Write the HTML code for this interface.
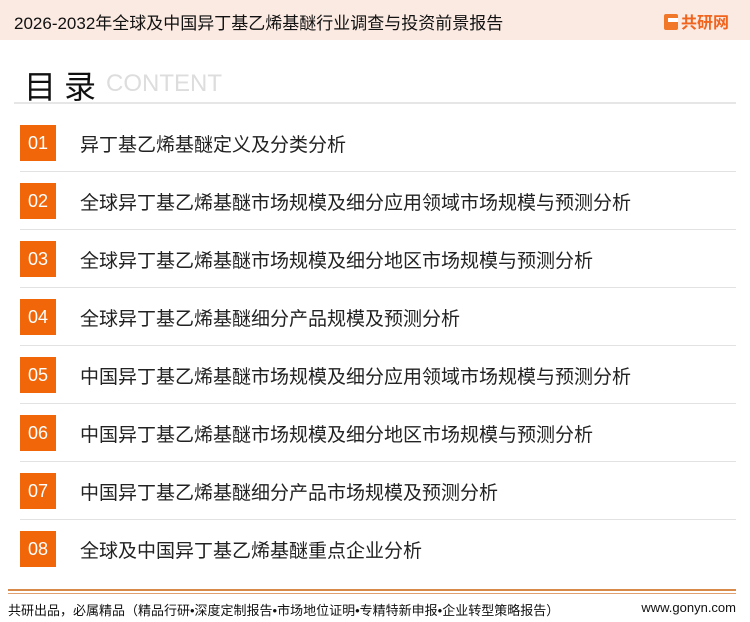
<!DOCTYPE html>
<html><head><meta charset="utf-8"><style>
*{margin:0;padding:0;box-sizing:border-box}
body{width:750px;height:622px;background:#fff;font-family:"Liberation Sans","Noto Sans CJK SC",sans-serif;position:relative;overflow:hidden;color:#222}
.hdr{position:absolute;left:0;top:0;width:750px;height:40px;background:#fbeae2}
.hdr .t{position:absolute;left:14px;top:9px;font-size:17px;color:#111}
.logo{position:absolute;left:664px;top:9px;font-size:16px;font-weight:bold;color:#f0641e}
.logo i{display:inline-block;width:14px;height:16px;background:#f07828;border-radius:2px;vertical-align:-2px;margin-right:3px;position:relative}
.logo i:after{content:"";position:absolute;left:4px;top:4px;width:10px;height:4px;background:#fff}
.ml{position:absolute;left:24px;top:62px;font-size:32px;color:#111;letter-spacing:8px}
.ct{position:absolute;left:106px;top:70px;font-size:24px;color:#ddd}
.tl{position:absolute;left:14px;top:102px;width:722px;height:2px;background:#e6e6e6}
.it{position:absolute;left:20px;width:716px;height:58px}
.it .n{position:absolute;left:0;top:0;width:36px;height:36px;background:#f2660a;color:#fff;font-size:18px;text-align:center;line-height:36px}
.it .x{position:absolute;left:60px;top:5px;font-size:19px;color:#222}
.it .d{position:absolute;left:0;top:46px;width:716px;height:1px;background:#e2e2e2}
.fl1{position:absolute;left:8px;top:589px;width:728px;height:2px;background:#d88a4a}
.fl2{position:absolute;left:8px;top:593px;width:728px;height:1px;background:#e0a070}
.ft{position:absolute;left:8px;top:600px;font-size:13px;color:#111}
.fu{position:absolute;right:14px;top:600px;font-size:13px;color:#111}
</style></head><body>
<div class="hdr"><div class="t">2026-2032年全球及中国异丁基乙烯基醚行业调查与投资前景报告</div><div class="logo"><i></i>共研网</div></div>
<div class="ml">目录</div><div class="ct">CONTENT</div><div class="tl"></div>
<div class="it" style="top:125px"><div class="n">01</div><div class="x">异丁基乙烯基醚定义及分类分析</div><div class="d"></div></div>
<div class="it" style="top:183px"><div class="n">02</div><div class="x">全球异丁基乙烯基醚市场规模及细分应用领域市场规模与预测分析</div><div class="d"></div></div>
<div class="it" style="top:241px"><div class="n">03</div><div class="x">全球异丁基乙烯基醚市场规模及细分地区市场规模与预测分析</div><div class="d"></div></div>
<div class="it" style="top:299px"><div class="n">04</div><div class="x">全球异丁基乙烯基醚细分产品规模及预测分析</div><div class="d"></div></div>
<div class="it" style="top:357px"><div class="n">05</div><div class="x">中国异丁基乙烯基醚市场规模及细分应用领域市场规模与预测分析</div><div class="d"></div></div>
<div class="it" style="top:415px"><div class="n">06</div><div class="x">中国异丁基乙烯基醚市场规模及细分地区市场规模与预测分析</div><div class="d"></div></div>
<div class="it" style="top:473px"><div class="n">07</div><div class="x">中国异丁基乙烯基醚细分产品市场规模及预测分析</div><div class="d"></div></div>
<div class="it" style="top:531px"><div class="n">08</div><div class="x">全球及中国异丁基乙烯基醚重点企业分析</div></div>
<div class="fl1"></div><div class="fl2"></div>
<div class="ft">共研出品，必属精品（精品行研•深度定制报告•市场地位证明•专精特新申报•企业转型策略报告）</div>
<div class="fu">www.gonyn.com</div>
</body></html>
